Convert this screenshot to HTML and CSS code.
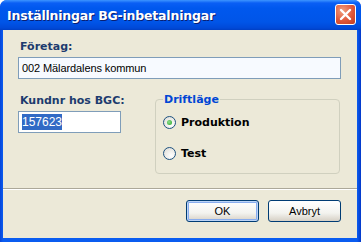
FILE: index.html
```html
<!DOCTYPE html>
<html>
<head>
	<title>Inställningar BG-inbetalningar</title>
	<link rel="stylesheet" href="styles.css">
</head>
<body>
	<div class="window">
		<div class="titlebar">
			<span class="title">Inställningar BG-inbetalningar</span>
			<span class="close">
				<svg width="13" height="13" viewBox="0 0 13 13">
					<path d="M2 2 L11 11 M11 2 L2 11" stroke="#fff" stroke-width="2.4" stroke-linecap="round"/>
				</svg>
			</span>
		</div>
		<div class="client">
			<div class="field">
				<label class="lbl">Företag:</label>
				<div class="input wide">002 Mälardalens kommun</div>
			</div>
			<div class="middle">
				<div class="field left">
					<label class="lbl">Kundnr hos BGC:</label>
					<div class="input short"><span class="sel">157623</span></div>
				</div>
				<fieldset class="group">
					<legend>Driftläge</legend>
					<div class="radio"><span class="dot checked"></span>Produktion</div>
					<div class="radio"><span class="dot"></span>Test</div>
				</fieldset>
			</div>
			<div class="sep"></div>
			<div class="buttons">
				<button class="btn default">OK</button>
				<button class="btn">Avbryt</button>
			</div>
		</div>
	</div>
</body>
</html>
```

FILE: styles.css
```css
body{
	margin: 0;
	font-family: "DejaVu Sans", Verdana, sans-serif;
}
.window{
	width: 361px;
	height: 242px;
	display: flex;
	flex-direction: column;
	background: linear-gradient(to right, #0845d8, #0a5cf0 3px, #0a5cf0 357px, #0339c9);
	border-radius: 7px 7px 0 0;
}
.titlebar{
	height: 30px;
	display: flex;
	align-items: center;
	justify-content: space-between;
	padding: 0 5px 0 7px;
	background: linear-gradient(to bottom, #3d95ff 0, #0a5ff5 3px, #0058ee 8px, #0055e8 22px, #0049d8 28px, #003fc4 30px);
	border-radius: 7px 7px 0 0;
}
.title{
	color: #fff;
	font-weight: bold;
	font-size: 12.5px;
	text-shadow: 1px 1px 0 #0a1f72;
	letter-spacing: -0.2px;
}
.close{
	width: 19px;
	height: 19px;
	border: 1px solid #fff;
	border-radius: 3px;
	background: radial-gradient(circle at 35% 30%, #f0a07f, #e0573a 55%, #c23c1d);
	display: flex;
	align-items: center;
	justify-content: center;
	margin-top: -1px;
}
.client{
	flex: 1;
	margin: 0 4px 4px 3px;
	background: #ece9d8;
	display: flex;
	flex-direction: column;
	padding: 10px 0 0 15px;
}
.field{
	display: flex;
	flex-direction: column;
	gap: 4px;
}
.left{
	width: 108px;
}
.lbl{
	color: #1d3b6e;
	font-weight: bold;
	font-size: 11px;
	padding-left: 2px;
	height: 13px;
	white-space: nowrap;
}
.input{
	height: 20px;
	border: 1px solid #7f9db9;
	background: #f7faff;
	font-family: "Liberation Sans", Arial, sans-serif;
	font-size: 11px;
	letter-spacing: -0.1px;
	line-height: 20px;
	padding-left: 3px;
	box-sizing: content-box;
}
.wide{
	width: 318px;
}
.short{
	width: 98px;
	background: #fff;
	font-size: 12px;
	letter-spacing: 0;
}
.sel{
	background: #316ac5;
	color: #fff;
	padding: 1px 0;
}
.middle{
	display: flex;
	gap: 29px;
	margin-top: 15px;
}
.group{
	margin: -1px 0 0 0;
	padding: 10px 0 0 7px;
	width: 185px;
	height: 81px;
	border: 1px solid #d0d0bf;
	border-radius: 4px;
	box-sizing: border-box;
}
.group legend{
	color: #0046d5;
	font-weight: bold;
	font-size: 11px;
	padding: 0 1px;
	margin-left: 0;
}
.radio{
	display: flex;
	align-items: center;
	gap: 5px;
	font-weight: bold;
	font-size: 11px;
	height: 13px;
	margin-bottom: 18px;
}
.dot{
	width: 11px;
	height: 11px;
	border: 1px solid #1c5180;
	border-radius: 50%;
	background: radial-gradient(circle at 65% 70%, #fff, #dcdad2);
	display: flex;
	align-items: center;
	justify-content: center;
}
.dot.checked::after{
	content: "";
	width: 5px;
	height: 5px;
	border-radius: 50%;
	background: radial-gradient(circle at 40% 40%, #8ee08e, #21a121);
}
.sep{
	margin: 14px 0 0 -15px;
	height: 1px;
	background: #aca899;
	border-bottom: 1px solid #fff;
}
.buttons{
	display: flex;
	justify-content: flex-end;
	gap: 9px;
	margin: 10px 16px 0 0;
}
.btn{
	width: 73px;
	height: 22px;
	border: 1px solid #003c74;
	border-radius: 3px;
	background: linear-gradient(to bottom, #fff, #f3f3ef 60%, #d6d0c5);
	font-family: "Liberation Sans", Arial, sans-serif;
	font-size: 11px;
	color: #000;
	padding: 0;
}
.btn.default{
	box-shadow: inset 0 0 0 1px #bcd4f6, inset 0 0 0 2px #89adee;
}
```
